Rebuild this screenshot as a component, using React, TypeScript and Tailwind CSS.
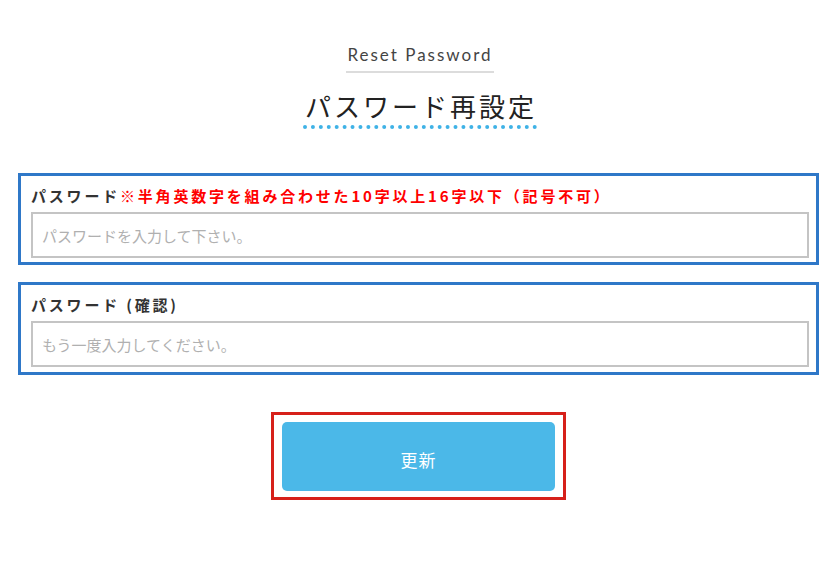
import { useState } from "react";

const jp = { fontFamily: '"Noto Sans CJK JP", "Noto Sans", sans-serif' };

export default function App() {
  const [pass, setPass] = useState("");
  const [confirm, setConfirm] = useState("");

  return (
    <div className="min-h-screen w-[840px] bg-white" style={jp}>
      {/* Heading */}
      <div className="flex flex-col items-center pt-[44px]">
        <p
          className="border-b-2 border-[#dcdcdc] px-px pb-[5px] text-[17px] leading-[22px] tracking-[2px] text-[#444]"
          style={{ fontFamily: 'Lato, "Noto Sans", sans-serif' }}
        >
          Reset Password
        </p>
        <h1 className="mt-[16px] border-b-[4px] border-dotted border-[#3fb2e6] pb-[2px] pl-[2px] text-[26px] leading-[34px] tracking-[3px] text-[#222]">
          パスワード再設定
        </h1>
      </div>

      {/* Form */}
      <form className="ml-[18px] mt-[44px] flex w-[801px] flex-col gap-[17px]">
        <div className="h-[92px] border-[3px] border-[#2f78c8] pl-[10px] pr-[7px] pt-[9px]">
          <label className="block text-[15px] font-bold leading-[22px] tracking-[2.8px] text-[#333]">
            パスワード
            <span className="text-[#ff0000]">※半角英数字を組み合わせた10字以上16字以下（記号不可）</span>
          </label>
          <input
            type="password"
            value={pass}
            onChange={e => setPass(e.target.value)}
            placeholder="パスワードを入力して下さい。"
            className="mt-[5px] h-[46px] w-full border-2 border-[#c4c4c4] px-[9px] text-[15px] text-[#333] placeholder-[#b0b0b0] outline-none"
          />
        </div>

        <div className="h-[93px] border-[3px] border-[#2f78c8] pl-[10px] pr-[7px] pt-[9px]">
          <label className="block text-[15px] font-bold leading-[22px] tracking-[2.8px] text-[#333]">
            パスワード (確認)
          </label>
          <input
            type="password"
            value={confirm}
            onChange={e => setConfirm(e.target.value)}
            placeholder="もう一度入力してください。"
            className="mt-[5px] h-[46px] w-full border-2 border-[#c4c4c4] px-[9px] text-[15px] text-[#333] placeholder-[#b0b0b0] outline-none"
          />
        </div>

        {/* Submit */}
        <div className="mt-[20px] flex justify-center">
          <div className="h-[88px] w-[295px] border-[3px] border-[#d6201a] px-[8px] pt-[7px]">
            <button
              type="button"
              className="h-[69px] w-full rounded-[5px] bg-[#4bb8e8] pt-[6px] text-[17px] tracking-[1px] text-white"
            >
              更新
            </button>
          </div>
        </div>
      </form>
    </div>
  );
}
